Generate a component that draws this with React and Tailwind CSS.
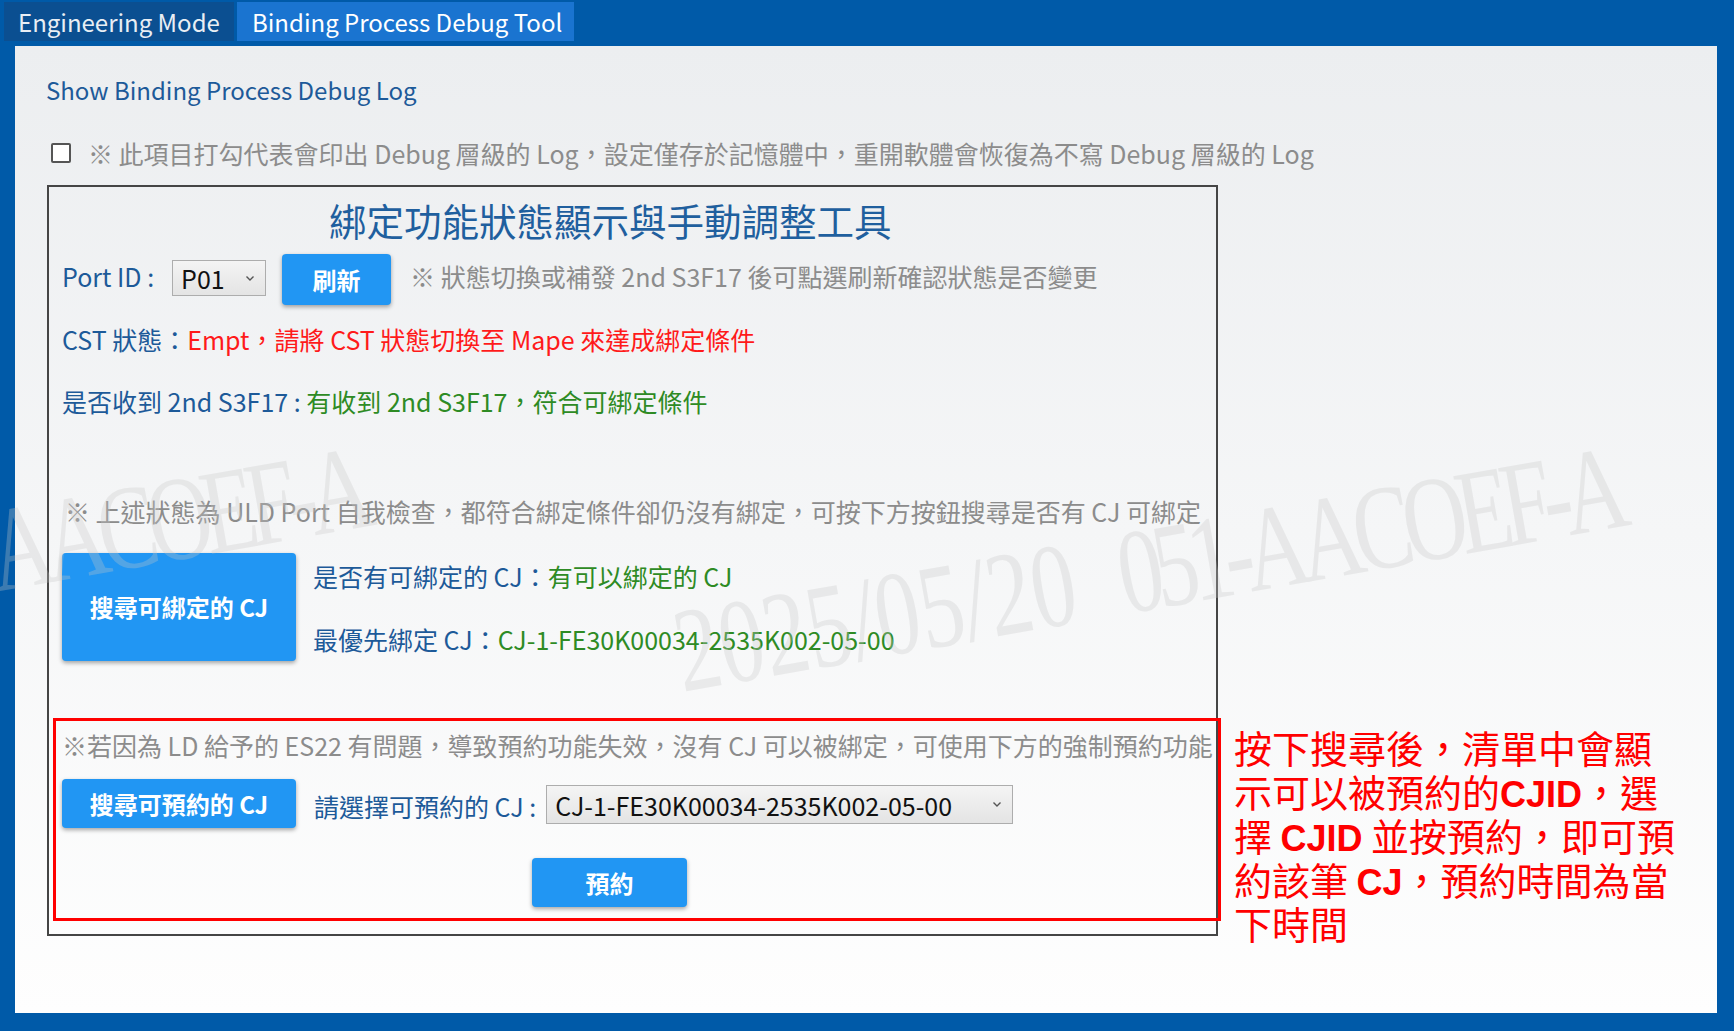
const ui = "font-['Noto_Sans_CJK_TC','Noto_Sans',sans-serif]";
const latinBold = "font-['Liberation_Sans',sans-serif] font-bold text-[36px]";

function Chevron() {
  return (
    <svg width="10" height="7" viewBox="0 0 10 7" className="shrink-0">
      <path d="M1.5 1.5 L5 5 L8.5 1.5" fill="none" stroke="#555" strokeWidth="1.4" />
    </svg>
  );
}

function FakeSelect({ value, className }) {
  return (
    <div
      className={`flex items-center justify-between border border-[#adadad] bg-gradient-to-b from-[#f4f4f4] to-[#e4e4e4] pl-[8px] pr-[10px] text-[#111] ${className}`}
    >
      <span>{value}</span>
      <Chevron />
    </div>
  );
}

function BlueButton({ children, className }) {
  return (
    <button
      className={`flex items-center justify-center rounded-[4px] bg-[#2196f3] font-bold text-white shadow-[0_2px_4px_rgba(0,0,0,0.35)] ${className}`}
    >
      {children}
    </button>
  );
}

function Watermark({ className }) {
  return (
    <span className={`absolute origin-bottom-left -rotate-[10deg] scale-y-[1.35] whitespace-nowrap ${className}`}>
      2025/05/20&nbsp;&nbsp;<span className="tracking-[-0.1em]">051-AACOEF-A</span>
    </span>
  );
}

export default function App() {
  return (
    <div className={`relative flex h-[1031px] w-[1734px] flex-col overflow-hidden bg-[#005aa8] ${ui}`}>
      {/* Tab strip */}
      <div className="flex h-[46px] items-start pl-[4px] pt-[2px] text-[24px] leading-[39px] text-white">
        <div className="w-[230px] bg-[#0b4f91] pl-[14px] text-[#e9eef4]">Engineering Mode</div>
        <div className="ml-[3px] w-[337px] bg-[#1a74d0] pl-[15px]">Binding Process Debug Tool</div>
      </div>

      {/* Panel */}
      <div className="ml-[15px] mr-[17px] mb-[18px] flex-1 bg-gradient-to-b from-[#eceef0] to-[#fefefe] pl-[31px]">
        <div className="mt-[28px] text-[24px] leading-[32px] text-[#1d5a99]">Show Binding Process Debug Log</div>

        <div className="mt-[31px] flex items-center text-[25px] leading-[32px] text-[#8c8c8c]">
          <div className="ml-[5px] h-[20px] w-[20px] rounded-[2px] border-2 border-[#555] bg-white" />
          <span className="ml-[17px]">※ 此項目打勾代表會印出 Debug 層級的 Log，設定僅存於記憶體中，重開軟體會恢復為不寫 Debug 層級的 Log</span>
        </div>

        <div className="mt-[16px] flex items-start">
          {/* Tool box */}
          <div className="ml-[1px] h-[751px] w-[1171px] border-2 border-[#454545] pl-[13px] text-[25px] leading-[32px]">
            <div className="ml-[267px] mt-[11px] text-[37.5px] leading-[44px] text-[#1f5f9e]">綁定功能狀態顯示與手動調整工具</div>

            <div className="mt-[12px] flex items-start">
              <span className="mt-[6px] text-[#1d5a99]">Port ID :</span>
              <FakeSelect value="P01" className="ml-[18px] mt-[6px] h-[36px] w-[94px]" />
              <BlueButton className="ml-[16px] h-[51px] w-[109px] text-[24px]">刷新</BlueButton>
              <span className="ml-[19px] mt-[6px] text-[#8c8c8c]">※ 狀態切換或補發 2nd S3F17 後可點選刷新確認狀態是否變更</span>
            </div>

            <div className="mt-[18px] text-[#1d5a99]">
              CST 狀態：<span className="text-[#ff1a1a]">Empt，請將 CST 狀態切換至 Mape 來達成綁定條件</span>
            </div>

            <div className="mt-[30px] text-[#1d5a99]">
              是否收到 2nd S3F17 : <span className="text-[#2e8b24]">有收到 2nd S3F17，符合可綁定條件</span>
            </div>

            <div className="mt-[78px] pl-[3px] text-[#8c8c8c]">
              ※ 上述狀態為 ULD Port 自我檢查，都符合綁定條件卻仍沒有綁定，可按下方按鈕搜尋是否有 CJ 可綁定
            </div>

            <div className="mt-[26px] flex items-center">
              <BlueButton className="h-[108px] w-[234px] text-[24px]">搜尋可綁定的 CJ</BlueButton>
              <div className="ml-[17px] flex flex-col">
                <div className="text-[#1d5a99]">
                  是否有可綁定的 CJ：<span className="text-[#2e8b24]">有可以綁定的 CJ</span>
                </div>
                <div className="mt-[31px] text-[#1d5a99]">
                  最優先綁定 CJ：<span className="text-[#2e8b24]">CJ-1-FE30K00034-2535K002-05-00</span>
                </div>
              </div>
            </div>

            {/* Force reserve section */}
            <div className="-ml-[9px] mt-[57px] mr-[-5px] h-[203px] border-[3px] border-[#ff0000] pl-[6px]">
              <div className="mt-[8px] text-[#8c8c8c]">
                ※若因為 LD 給予的 ES22 有問題，導致預約功能失效，沒有 CJ 可以被綁定，可使用下方的強制預約功能
              </div>
              <div className="mt-[18px] flex items-center">
                <BlueButton className="h-[49px] w-[234px] text-[24px]">搜尋可預約的 CJ</BlueButton>
                <span className="ml-[18px] mt-[5px] text-[#1d5a99]">請選擇可預約的 CJ :</span>
                <FakeSelect value="CJ-1-FE30K00034-2535K002-05-00" className="ml-[10px] mt-[2px] h-[39px] w-[467px]" />
              </div>
              <div className="mt-[30px] flex">
                <BlueButton className="ml-[470px] h-[49px] w-[155px] text-[24px]">預約</BlueButton>
              </div>
            </div>
          </div>

          {/* Annotation */}
          <div className="ml-[16px] mt-[540px] text-[38px] leading-[44px] text-[#ff0000]">
            <div className="h-[44px] whitespace-nowrap">按下搜尋後，清單中會顯</div>
            <div className="h-[44px] whitespace-nowrap">
              示可以被預約的<span className={latinBold}>CJID</span>，選
            </div>
            <div className="h-[44px] whitespace-nowrap">
              擇 <span className={latinBold}>CJID</span> 並按預約，即可預
            </div>
            <div className="h-[44px] whitespace-nowrap">
              約該筆 <span className={latinBold}>CJ</span>，預約時間為當
            </div>
            <div className="h-[44px] whitespace-nowrap">下時間</div>
          </div>
        </div>
      </div>

      {/* Watermark overlay */}
      <div className="pointer-events-none absolute inset-0 font-['Liberation_Serif',serif] text-[89px] leading-none text-[#c8c8c8] opacity-30">
        <Watermark className="left-[-569px] top-[623px]" />
        <Watermark className="left-[686px] top-[623px]" />
      </div>
    </div>
  );
}
